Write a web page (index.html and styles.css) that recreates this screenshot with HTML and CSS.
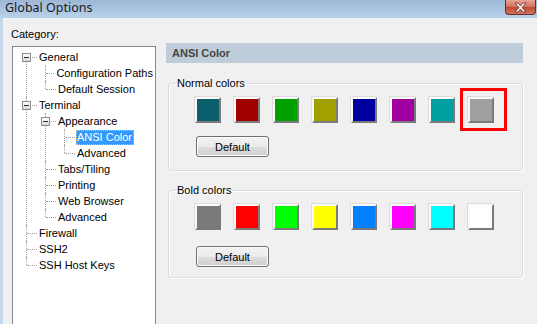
FILE: index.html
```html
<!DOCTYPE html>
<html lang="en">
<head>
  <meta charset="UTF-8" />
  <title>Global Options</title>
  <link rel="stylesheet" href="styles.css">
</head>
<body>
  <div class="titlebar">
    <span class="title">Global Options</span>
    <span class="close">
      <svg width="15" height="11" viewBox="0 0 15 11">
        <path d="M2 1h3l2.5 3 2.5-3h3l-4 4.5 4 4.5h-3l-2.5-3-2.5 3h-3l4-4.5z" fill="#fff" stroke="#5a2a2a" stroke-width="0.8"/>
      </svg>
    </span>
  </div>

  <div class="main">
    <div class="left">
      <div class="cat">Category:</div>
      <div class="tree">
        <ul class="root">
          <li>
            <div class="row"><span class="exp"></span><span class="stub short"></span><span class="lbl">General</span></div>
            <ul>
              <li><div class="row"><span class="stub"></span><span class="lbl">Configuration Paths</span></div></li>
              <li><div class="row"><span class="stub"></span><span class="lbl">Default Session</span></div></li>
            </ul>
          </li>
          <li>
            <div class="row"><span class="exp"></span><span class="stub short"></span><span class="lbl">Terminal</span></div>
            <ul>
              <li>
                <div class="row"><span class="exp"></span><span class="stub short"></span><span class="lbl">Appearance</span></div>
                <ul>
                  <li><div class="row"><span class="stub"></span><span class="lbl sel">ANSI Color</span></div></li>
                  <li><div class="row"><span class="stub"></span><span class="lbl">Advanced</span></div></li>
                </ul>
              </li>
              <li><div class="row"><span class="stub"></span><span class="lbl">Tabs/Tiling</span></div></li>
              <li><div class="row"><span class="stub"></span><span class="lbl">Printing</span></div></li>
              <li><div class="row"><span class="stub"></span><span class="lbl">Web Browser</span></div></li>
              <li><div class="row"><span class="stub"></span><span class="lbl">Advanced</span></div></li>
            </ul>
          </li>
          <li><div class="row"><span class="stub"></span><span class="lbl">Firewall</span></div></li>
          <li><div class="row"><span class="stub"></span><span class="lbl">SSH2</span></div></li>
          <li><div class="row"><span class="stub"></span><span class="lbl">SSH Host Keys</span></div></li>
        </ul>
      </div>
    </div>

    <div class="right">
      <div class="header">ANSI Color</div>

      <fieldset class="group">
        <legend>Normal colors</legend>
        <div class="swatches">
          <span class="sw c-teal"></span>
          <span class="sw c-red"></span>
          <span class="sw c-green"></span>
          <span class="sw c-olive"></span>
          <span class="sw c-navy"></span>
          <span class="sw c-purple"></span>
          <span class="sw c-cyan"></span>
          <span class="sw c-gray marked"></span>
        </div>
        <button class="btn">Default</button>
      </fieldset>

      <fieldset class="group bold">
        <legend>Bold colors</legend>
        <div class="swatches">
          <span class="sw c-dgray"></span>
          <span class="sw c-bred"></span>
          <span class="sw c-bgreen"></span>
          <span class="sw c-byellow"></span>
          <span class="sw c-bblue"></span>
          <span class="sw c-bmagenta"></span>
          <span class="sw c-bcyan"></span>
          <span class="sw c-white"></span>
        </div>
        <button class="btn">Default</button>
      </fieldset>
    </div>
  </div>
</body>
</html>
```

FILE: styles.css
```css
body {
  margin: 0;
  background: #f0f0f0;
  font-family: 'Liberation Sans', Arial, sans-serif;
  font-size: 11px;
  color: #000;
  overflow: hidden;
}
.titlebar {
  height: 18px;
  display: flex;
  justify-content: space-between;
  align-items: flex-start;
  background: linear-gradient(#9db7d5, #b9d1ea);
}
.title {
  font-family: 'Noto Sans', sans-serif;
  font-size: 12.5px;
  line-height: 16px;
  padding-left: 5px;
  color: #1a1a1a;
}
.close {
  width: 29px;
  height: 14px;
  margin-right: 1px;
  border: 1px solid #6b2b2b;
  border-top: none;
  border-radius: 0 0 4px 4px;
  background: linear-gradient(#e8a493, #d0705c 50%, #c0462f 51%, #d4755c);
  display: flex;
  align-items: center;
  justify-content: center;
}
.main {
  display: flex;
  height: 306px;
  overflow: hidden;
  border-left: 3px solid #c3d6ea;
}
.left {
  width: 144px;
  padding: 10px 0 0 9px;
}
.cat {
  line-height: 13px;
  margin-left: -1px;
  margin-bottom: 5px;
}
.tree {
  width: 142px;
  height: 276px;
  border: 1px solid #828790;
  border-bottom: none;
  background: #fff;
  padding-top: 2px;
}
.tree ul {
  list-style: none;
  margin: 0;
  padding: 0 0 0 19px;
}
.tree ul.root {
  padding-left: 4px;
}
.tree li {
  position: relative;
}
.tree li::before {
  content: '';
  position: absolute;
  left: 9px;
  top: 0;
  bottom: 0;
  border-left: 1px dotted #a0a0a0;
}
.tree li:last-child::before {
  bottom: auto;
  height: 8px;
}
.tree .root > li:first-child::before {
  top: 8px;
}
.row {
  position: relative;
  display: flex;
  align-items: center;
  height: 16px;
  white-space: nowrap;
}
.exp {
  position: relative;
  z-index: 1;
  box-sizing: border-box;
  width: 9px;
  height: 9px;
  margin-left: 5px;
  border: 1px solid #8e8f8f;
  background: linear-gradient(#ffffff, #d8d8d8);
  display: flex;
  align-items: center;
  justify-content: center;
}
.exp::after {
  content: '';
  width: 5px;
  height: 1px;
  background: #2b2b2b;
}
.stub {
  width: 10px;
  margin-left: 10px;
  border-top: 1px dotted #a0a0a0;
}
.stub.short {
  width: 5px;
  margin-left: 1px;
}
.lbl {
  margin-left: 1px;
  border: 1px solid transparent;
  padding: 0 1px 0 0;
  line-height: 13px;
  color: #000;
}
.lbl.sel {
  background: #3399ff;
  color: #fff;
  border: 1px dotted #f0c060;
}
.right {
  margin-left: 10px;
  padding-top: 25px;
  width: 357px;
}
.header {
  height: 20px;
  line-height: 20px;
  background: #bfcddb;
  padding-left: 6px;
  font-weight: bold;
  color: #454545;
}
.group {
  margin: 14px 0 0 2px;
  width: 355px;
  padding: 0 0 13px 7px;
  box-sizing: border-box;
  border: 1px solid #d5dfe5;
  border-radius: 3px;
  box-shadow: inset 1px 1px #fff, 1px 1px #fff;
}
.group.bold {
  margin-top: 13px;
  padding-bottom: 10px;
}
.group legend {
  padding: 0 1px;
  line-height: 13px;
}
.swatches {
  display: flex;
  gap: 13px;
  margin: 7px 0 0 19px;
}
.sw {
  position: relative;
  box-sizing: border-box;
  width: 26px;
  height: 26px;
  border: 2px solid;
  border-color: #fafafa #7a7a7a #7a7a7a #fafafa;
  box-shadow: -1px -1px #dcdcdc;
}
.sw.marked::after {
  content: '';
  position: absolute;
  left: -10px;
  top: -11px;
  width: 41px;
  height: 37px;
  border: 3px solid #ff0000;
}
.c-teal { background: #0b5f6b; }
.c-red { background: #a00000; }
.c-green { background: #00a000; }
.c-olive { background: #a0a000; }
.c-navy { background: #0000a0; }
.c-purple { background: #a000a0; }
.c-cyan { background: #00a0a0; }
.c-gray { background: #a0a0a0; }
.c-dgray { background: #7a7a7a; }
.c-bred { background: #ff0000; }
.c-bgreen { background: #00ff00; }
.c-byellow { background: #ffff00; }
.c-bblue { background: #0080ff; }
.c-bmagenta { background: #ff00ff; }
.c-bcyan { background: #00ffff; }
.c-white { background: #ffffff; }
.btn {
  display: block;
  margin: 13px 0 0 20px;
  width: 73px;
  height: 21px;
  padding: 0;
  border: 1px solid #707070;
  border-radius: 3px;
  background: linear-gradient(#f2f2f2, #ebebeb 50%, #dddddd 51%, #cfcfcf);
  box-shadow: inset 0 0 0 1px #fcfcfc;
  font-family: 'Liberation Sans', Arial, sans-serif;
  font-size: 11px;
  color: #000;
}
.bold .btn {
  margin-top: 16px;
}
```
